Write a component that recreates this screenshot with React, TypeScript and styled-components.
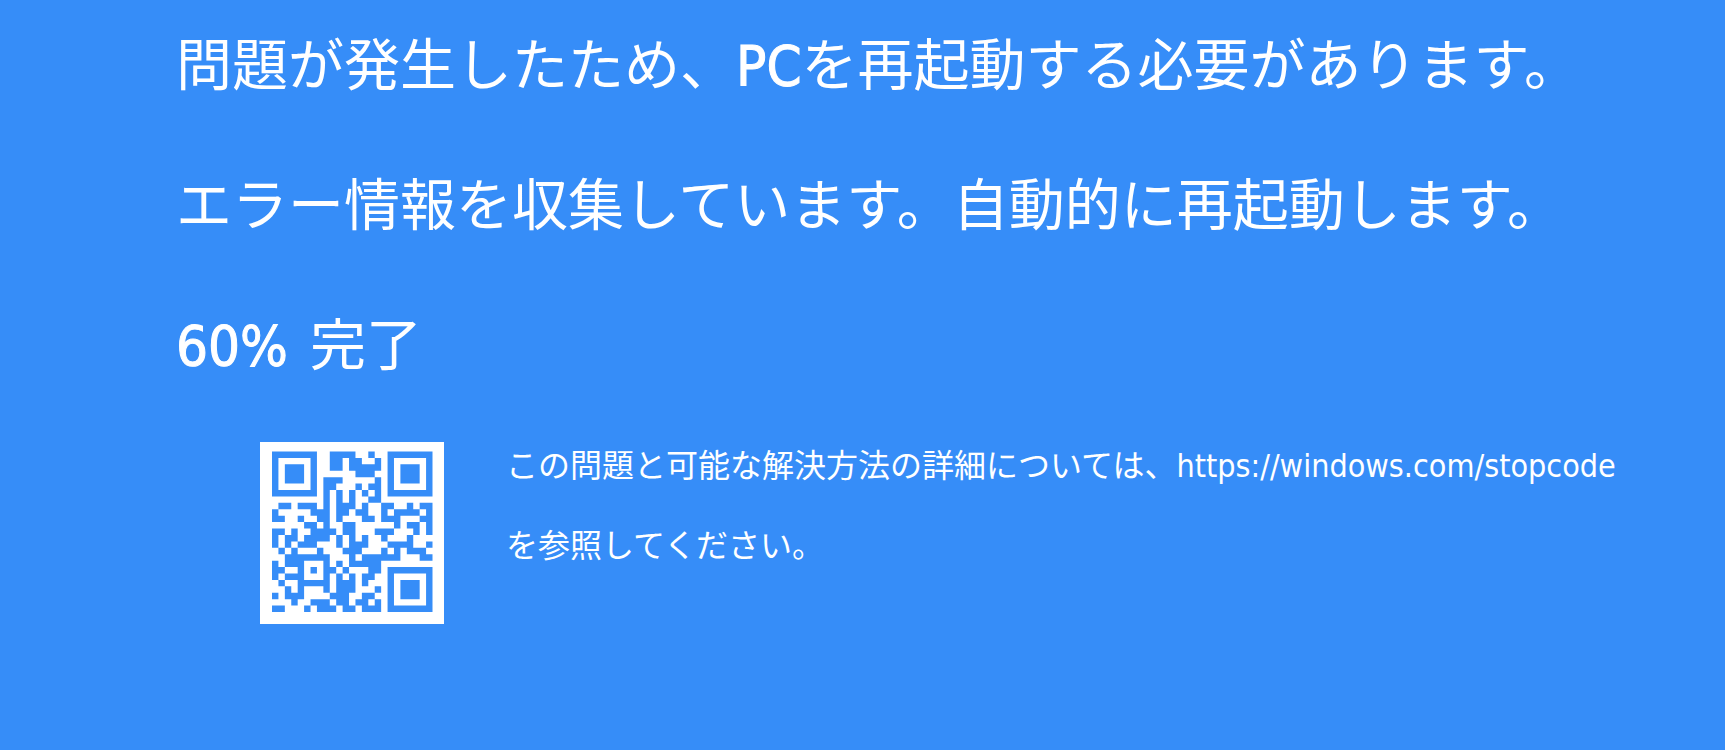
import React from "react";
import styled, { createGlobalStyle } from "styled-components";

const blue = "#368df8";

const GlobalStyle = createGlobalStyle`
  body {
    margin: 0;
    background: ${blue};
  }
`;

const Screen = styled.main`
  box-sizing: border-box;
  min-height: 100vh;
  padding: 0 80px 40px 176px;
  background: ${blue};
  color: #fff;
  font-family: "DejaVu Sans Condensed", "Noto Sans CJK JP", sans-serif;
`;

const Messages = styled.header`
  display: flex;
  flex-direction: column;
  gap: 8px;
`;

const Message = styled.p`
  margin: 0;
  font-size: 56px;
  font-weight: 400;
  line-height: 132px;
`;

const Latin = styled.span`
  -webkit-text-stroke: 1px currentColor;
`;

const Percent = styled(Latin)`
  margin-right: 6px;
`;

const Details = styled.section`
  display: flex;
  align-items: flex-start;
  gap: 62px;
  padding: 14px 0 0 84px;
`;

const QrCode = styled.svg`
  display: block;
  flex: none;
  width: 184px;
  height: 182px;
  margin-top: 16px;
`;

const Help = styled.p`
  flex: 1;
  margin: 0;
  font-size: 32px;
  line-height: 80px;
`;

const HelpLink = styled.a`
  color: inherit;
  text-decoration: none;
`;

const modules = [
  "1111111001111001001111111",
  "1000001001101100101000001",
  "1011101001101111101011101",
  "1011101000000111001011101",
  "1011101011100000101011101",
  "1000001011000101101000001",
  "1111111010101010101111111",
  "0000000010101001100000000",
  "0110111010111010011001011",
  "1000001110110110010111101",
  "1100100110100011011100011",
  "0000011010011000000101101",
  "1101001111011000111000101",
  "1011011110101010010001000",
  "1010111000101110001111001",
  "0101000100011100010101110",
  "0011111110001011111100011",
  "1011100010101111100000000",
  "1100101011010001101111111",
  "1011100010101011001000001",
  "0100111110111010001011101",
  "0010100010111000101011101",
  "1011100001110011001011101",
  "0001001110110110101000001",
  "1100010111011011101111111",
];

// One closed path per horizontal run of filled modules
const modulePath = modules
  .map((row, y) =>
    Array.from(row.matchAll(/1+/g), (run) => `M${run.index} ${y}h${run[0].length}v1h-${run[0].length}z`).join("")
  )
  .join("");

export default function App() {
  return (
    <>
      <GlobalStyle />
      <Screen lang="ja">
        <Messages>
          <Message as="h1">
            問題が発生したため、<Latin>PC</Latin>を再起動する必要があります。
          </Message>
          <Message>エラー情報を収集しています。自動的に再起動します。</Message>
          <Message>
            <Percent>60%</Percent> 完了
          </Message>
        </Messages>
        <Details>
          <QrCode viewBox="0 0 184 182" role="img" aria-label="QR">
            <rect width="184" height="182" fill="#fff" />
            <path d={modulePath} transform="translate(12 9.5) scale(6.42)" fill={blue} />
          </QrCode>
          <Help>
            この問題と可能な解決方法の詳細については、
            <HelpLink href="https://windows.com/stopcode">https://windows.com/stopcode</HelpLink>{" "}
            を参照してください。
          </Help>
        </Details>
      </Screen>
    </>
  );
}
